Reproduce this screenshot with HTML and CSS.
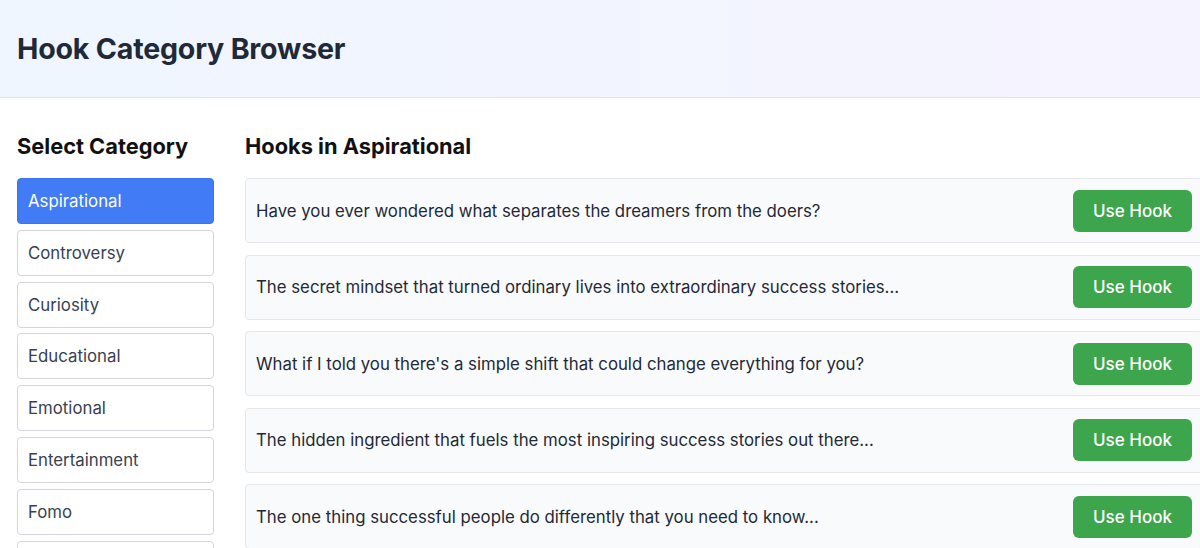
FILE: index.html
```html
<!DOCTYPE html>
<html lang="en">
<head>
<meta charset="utf-8">
<title>Hook Category Browser</title>
<link rel="stylesheet" href="styles.css">
</head>
<body>
<div class="page">
  <header class="header">
    <h1 class="title">Hook Category Browser</h1>
  </header>
  <main class="main">
    <aside class="sidebar">
      <h2 class="section-title">Select Category</h2>
      <div class="cat-list">
        <button class="cat active">Aspirational</button>
        <button class="cat">Controversy</button>
        <button class="cat">Curiosity</button>
        <button class="cat">Educational</button>
        <button class="cat">Emotional</button>
        <button class="cat">Entertainment</button>
        <button class="cat">Fomo</button>
        <button class="cat">Humor</button>
      </div>
    </aside>
    <section class="content">
      <h2 class="section-title">Hooks in Aspirational</h2>
      <div class="hook-list">
        <div class="hook"><span class="hook-text">Have you ever wondered what separates the dreamers from the doers?</span><button class="use">Use Hook</button></div>
        <div class="hook"><span class="hook-text">The secret mindset that turned ordinary lives into extraordinary success stories...</span><button class="use">Use Hook</button></div>
        <div class="hook"><span class="hook-text">What if I told you there's a simple shift that could change everything for you?</span><button class="use">Use Hook</button></div>
        <div class="hook"><span class="hook-text">The hidden ingredient that fuels the most inspiring success stories out there...</span><button class="use">Use Hook</button></div>
        <div class="hook"><span class="hook-text">The one thing successful people do differently that you need to know...</span><button class="use">Use Hook</button></div>
      </div>
    </section>
  </main>
</div>
</body>
</html>
```
FILE: styles.css
```css
html, body {
  margin: 0;
  padding: 0;
  overflow: hidden;
  background: #ffffff;
}
body {
  font-family: Inter, "Helvetica Neue", Arial, sans-serif;
  color: #1f2937;
}
.page {
  width: 1203px;
}
.header {
  height: 97px;
  border-bottom: 1px solid #e5e7eb;
  background: linear-gradient(90deg, #eff6ff 0%, #f5f3ff 100%);
  display: flex;
  align-items: center;
  padding: 0 17px;
}
.title {
  margin: 0;
  font-size: 28.6px;
  font-weight: 700;
  color: #1f2937;
  letter-spacing: -0.2px;
}
.main {
  display: flex;
  gap: 31px;
  padding: 32px 0 0 17px;
}
.sidebar {
  width: 197px;
  flex: none;
}
.content {
  flex: 1;
}
.section-title {
  margin: 0 0 16px 0;
  font-size: 21.8px;
  font-weight: 700;
  color: #111111;
  height: 32px;
  line-height: 32px;
}
.cat-list {
  display: flex;
  flex-direction: column;
  gap: 5.8px;
}
.cat {
  height: 46px;
  flex: none;
  border: 1px solid #d1d5db;
  border-radius: 4px;
  background: #ffffff;
  text-align: left;
  padding: 0 10px;
  font-family: inherit;
  font-size: 16.8px;
  color: #374151;
}
.cat.active {
  background: #417bf6;
  border-color: #3b74ee;
  color: #ffffff;
}
.hook-list {
  display: flex;
  flex-direction: column;
  gap: 11.5px;
}
.hook {
  height: 65px;
  flex: none;
  box-sizing: border-box;
  border: 1px solid #e5e7eb;
  border-radius: 4px;
  background: #f9fafb;
  display: flex;
  align-items: center;
  justify-content: space-between;
  padding: 0 10px;
}
.hook-text {
  font-size: 16.8px;
  color: #1f2937;
}
.use {
  width: 119px;
  height: 42px;
  border: none;
  border-radius: 6px;
  background: #3da54b;
  color: #ffffff;
  font-family: inherit;
  font-size: 17px;
  font-weight: 500;
}
```
